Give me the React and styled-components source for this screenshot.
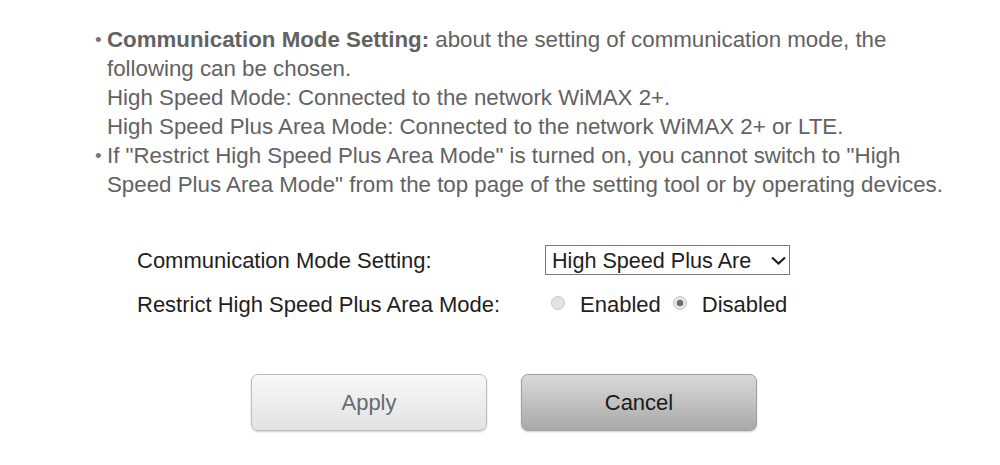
import React from "react";
import styled, { createGlobalStyle } from "styled-components";

const GlobalStyle = createGlobalStyle`
  body {
    margin: 0;
    background: #fff;
    font-family: "Liberation Sans", Arial, sans-serif;
  }
`;

const Page = styled.div`
  width: 1000px;
  height: 465px;
  padding-top: 25px;
  box-sizing: border-box;
  overflow: hidden;
`;

const Notes = styled.ul`
  margin: 0 0 0 107px;
  padding: 0;
  list-style: none;
  font-size: 22.3px;
  line-height: 29px;
  white-space: nowrap;
  color: #626262;
`;

const Note = styled.li`
  position: relative;
  &::before {
    content: "•";
    position: absolute;
    left: -12px;
    top: 0;
    font-size: 19px;
    color: #777;
  }
`;

const Form = styled.div`
  display: grid;
  grid-template-columns: 408px auto;
  grid-template-rows: 30px 25px;
  row-gap: 17px;
  align-items: center;
  margin: 46px 0 0 137px;
  font-size: 22px;
  line-height: 25px;
  color: #1e1e1e;
`;

const Select = styled.div`
  display: flex;
  align-items: center;
  justify-content: space-between;
  width: 245px;
  height: 30px;
  box-sizing: border-box;
  border: 1px solid #7a7a7a;
  padding: 0 2px 0 6px;
  font-size: 21.6px;
  color: #1e1e1e;
`;

const Radios = styled.div`
  display: flex;
  align-items: center;
  padding-left: 6px;
`;

const Radio = styled.span`
  width: 14px;
  height: 14px;
  box-sizing: border-box;
  border-radius: 50%;
  border: 1px solid #c8c8c8;
  background: ${p =>
    p.$checked
      ? "radial-gradient(circle, #6e6e6e 0 3px, #e4e4e4 3.6px)"
      : "#e2e2e2"};
  margin: -3px 15px 0 ${p => (p.$first ? "0" : "12px")};
`;

const Buttons = styled.div`
  display: flex;
  gap: 34px;
  margin: 57px 0 0 251px;
`;

const Button = styled.button`
  width: 236px;
  height: 57px;
  border-radius: 7px;
  font-family: "Liberation Sans", Arial, sans-serif;
  font-size: 22px;
  padding: 0;
  border: 1px solid ${p => (p.$light ? "#bdbdbd" : "#a0a0a0")};
  color: ${p => (p.$light ? "#6a6a6a" : "#1a1a1a")};
  background: ${p =>
    p.$light
      ? "linear-gradient(#f8f8f8, #e2e2e2)"
      : "linear-gradient(#d9d9d9, #a9a9a9)"};
  box-shadow: 0 1px 2px rgba(0, 0, 0, 0.2);
`;

const Chevron = () => (
  <svg width="17" height="11" viewBox="0 0 17 11">
    <path d="M2 2.5l6.5 6 6.5-6" fill="none" stroke="#1e1e1e" strokeWidth="2.2" />
  </svg>
);

export default function App() {
  return (
    <Page>
      <GlobalStyle />
      <Notes>
        <Note>
          <b>Communication Mode Setting:</b> about the setting of communication mode, the
          <br />
          following can be chosen.
          <br />
          High Speed Mode: Connected to the network WiMAX 2+.
          <br />
          High Speed Plus Area Mode: Connected to the network WiMAX 2+ or LTE.
        </Note>
        <Note>
          If "Restrict High Speed Plus Area Mode" is turned on, you cannot switch to "High
          <br />
          Speed Plus Area Mode" from the top page of the setting tool or by operating devices.
        </Note>
      </Notes>
      <Form>
        <span>Communication Mode Setting:</span>
        <Select>
          <span>High Speed Plus Are</span>
          <Chevron />
        </Select>
        <span>Restrict High Speed Plus Area Mode:</span>
        <Radios>
          <Radio $first />
          <span>Enabled</span>
          <Radio $checked />
          <span>Disabled</span>
        </Radios>
      </Form>
      <Buttons>
        <Button $light>Apply</Button>
        <Button>Cancel</Button>
      </Buttons>
    </Page>
  );
}
